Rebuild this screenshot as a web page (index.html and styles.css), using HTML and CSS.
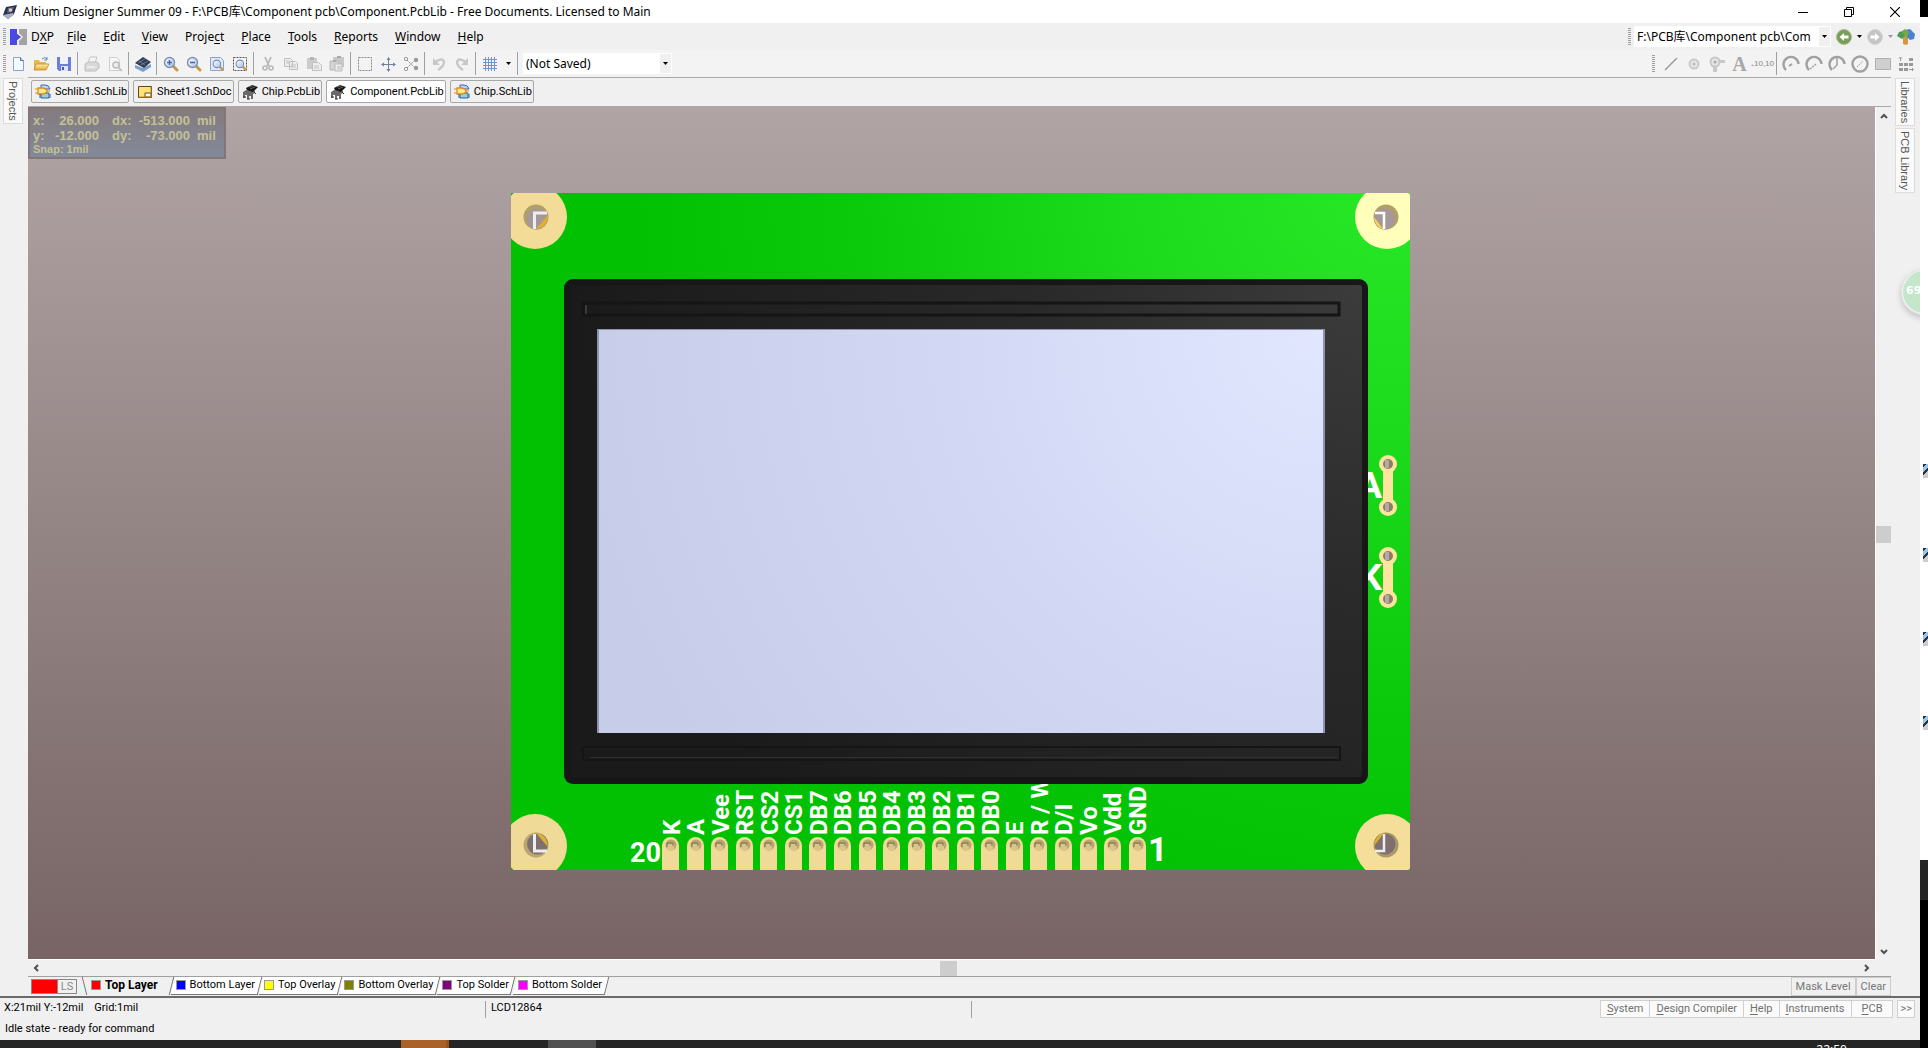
FILE: index.html
```html
<!DOCTYPE html>
<html lang="en">
<head>
<meta charset="utf-8">
<title>Altium Designer Summer 09</title>
<link rel="stylesheet" href="styles.css">
</head>
<body>
<svg class="defs" aria-hidden="true">
  <defs>
    <linearGradient id="lens" x1="0" y1="0" x2="1" y2="1"><stop offset="0" stop-color="#fff"/><stop offset="1" stop-color="#a9bfe6"/></linearGradient>
    <linearGradient id="folder" x1="0" y1="0" x2="0" y2="1"><stop offset="0" stop-color="#fff0a8"/><stop offset="1" stop-color="#e2a93c"/></linearGradient>
    <symbol id="i-caret" viewBox="0 0 5 3"><path d="M0 0h5L2.500 3z" fill="currentColor"/></symbol>
    <symbol id="i-mag" viewBox="0 0 16 16"><path d="M10 10l4 4" stroke="#c49a4a" stroke-width="3" stroke-linecap="round"/><circle cx="6.500" cy="6.500" r="5" fill="url(#lens)" stroke="#7b8fb5" stroke-width="1.400"/></symbol>
    <symbol id="i-chip" viewBox="0 0 16 16"><path d="M1 8l5-3 7 2v2l-2 1v5H9v-3H7v3H5v-4H3v3H1z" fill="#6a6a6a"/><path d="M4 4l6-3 6 2-5 5-6-2z" fill="#161616"/><path d="M1 13h3M5 15h3M12 8l2 2" stroke="#333"/><path d="M7 3l4-1M8 5l5-2" stroke="#777" stroke-width=".8"/></symbol>
    <symbol id="i-sch" viewBox="0 0 16 16"><path d="M6 1h4q4 0 5 4H6z" fill="#bcd7f5" stroke="#3467c4"/><path d="M6 9h8v5H6z" fill="#9fd0c8" stroke="#2b5fae"/><path d="M3 4h5q4 1 4 3t-4 3H3z" fill="#ffe98a" stroke="#df8a1c" stroke-width="1.300"/><path d="M0 5h3M0 9h3M12 7h3" stroke="#df8a1c"/><path d="M4 11h2M4 13h2M14 11h2M14 13h2" stroke="#2b5fae"/></symbol>
    <symbol id="i-arc" viewBox="0 0 18 18"><path d="M4 15A7.500 7.500 0 1 1 16.500 9" fill="none" stroke="#a0a0a0" stroke-width="2.400"/></symbol>
  </defs>
</svg>
<div class="screen">
  <div class="window">
    <header class="titlebar">
      <svg class="icon" viewBox="0 0 16 16"><path d="M1 11l3-8 11-2-3 9-6 5z" fill="#26324e"/><path d="M1 11l10-2 1 2-6 4z" fill="#aab2c2"/><path d="M6 4l6-1-2 5-5 1z" fill="#56698f"/><circle cx="8.500" cy="6" r="1.800" fill="#e9c9a0"/></svg>
      <h1>Altium Designer Summer 09 - F:\PCB库\Component pcb\Component.PcbLib - Free Documents. Licensed to Main</h1>
      <div class="wincontrols">
        <button aria-label="Minimize"><svg viewBox="0 0 10 10"><path d="M0 5.500h10" stroke="#000"/></svg></button>
        <button aria-label="Restore"><svg viewBox="0 0 10 10"><path d="M.5 2.500h7v7h-7zM2.500 2.500v-2h7v7h-2" fill="none" stroke="#000"/></svg></button>
        <button aria-label="Close"><svg viewBox="0 0 10 10"><path d="M0 0l10 10M10 0L0 10" stroke="#000" stroke-width="1.200"/></svg></button>
      </div>
    </header>

    <div class="menubar">
      <i class="grip"></i>
      <nav class="menus">
        <button class="dxp"><svg class="icon" viewBox="0 0 17 16"><path d="M0 0h9v16H0z" fill="#4a4ae0"/><path d="M9 0h8v16H9z" fill="#a3a3a3"/><path d="M7 0v5l4 3-4 3v5h2v-4l4-4-4-4V0z" fill="#f0f0f0"/><path d="M6 4l5 4-5 4z" fill="#4a4ae0"/></svg>D<u>X</u>P</button>
        <button><u>F</u>ile</button>
        <button><u>E</u>dit</button>
        <button><u>V</u>iew</button>
        <button>Proje<u>c</u>t</button>
        <button><u>P</u>lace</button>
        <button><u>T</u>ools</button>
        <button><u>R</u>eports</button>
        <button><u>W</u>indow</button>
        <button><u>H</u>elp</button>
      </nav>
      <div class="navtools">
        <i class="grip"></i>
        <div class="combo address"><select aria-label="Document path"><option>F:\PCB库\Component pcb\Com</option></select><svg class="caret"><use href="#i-caret"/></svg></div>
        <button class="tool" aria-label="Back"><svg class="icon" viewBox="0 0 16 16"><circle cx="8" cy="8" r="7.500" fill="#7a9d57" stroke="#a9bf94"/><path d="M3.500 8L8 4v2.500h4.500v3H8V12z" fill="#fff"/></svg></button>
        <button class="drop" aria-label="Back history"><svg class="caret"><use href="#i-caret"/></svg></button>
        <button class="tool" aria-label="Forward"><svg class="icon" viewBox="0 0 16 16"><circle cx="8" cy="8" r="7.500" fill="#c4c4c4" stroke="#d6d6d6"/><path d="M12.500 8L8 4v2.500H3.500v3H8V12z" fill="#fff"/></svg></button>
        <button class="drop off" aria-label="Forward history"><svg class="caret"><use href="#i-caret"/></svg></button>
        <button class="tool" aria-label="Home"><svg class="icon wide" viewBox="0 0 18 16"><path d="M6 7h5v8l-2 1-3-1z" fill="#d19a3c"/><path d="M0 7l2-4 4-1 3 4-4 4z" fill="#4f9a55"/><path d="M8 1l5-1 5 5-1 5-4 1-4-4z" fill="#4a82cf"/><path d="M5 2l3-2 4 3-2 5-3-2z" fill="#75a94a"/></svg></button>
      </div>
    </div>

    <div class="toolbar">
      <i class="grip"></i>
      <div class="tools">
        <button class="tool" aria-label="New"><svg class="icon" viewBox="0 0 16 16"><path d="M3.500 1.500h7l3 3v10h-10z" fill="#f4f8ff" stroke="#8ba3c7"/><path d="M10.500 1.500v3h3" fill="#c9d8ee" stroke="#56729e"/></svg></button>
        <button class="tool" aria-label="Open"><svg class="icon" viewBox="0 0 16 16"><path d="M1 4h5l1 2h6v8H1z" fill="#e6b850"/><path d="M3 8h13l-3 6H1z" fill="url(#folder)" stroke="#c38c2e" stroke-width=".8"/><path d="M9 3q3-3 5 0M14 1v3h-3" fill="none" stroke="#6b86b5"/></svg></button>
        <button class="tool" aria-label="Save"><svg class="icon" viewBox="0 0 16 16"><path d="M1 1h14v14H3l-2-2z" fill="#6c7fd6"/><path d="M4 1h8v7H4z" fill="#eef1ff"/><path d="M5 10h7v5H5z" fill="#dfe3f4"/><path d="M6 11h2v3H6z" fill="#4656a8"/></svg></button>
        <i class="sep"></i>
        <button class="tool" aria-label="Print"><svg class="icon" viewBox="0 0 16 16"><path d="M4 7l2-6h7l-2 6z" fill="#f4f4f4" stroke="#c4c4c4"/><path d="M1 8l3-2h9l2 2v4l-3 3H1z" fill="#d8d8d8" stroke="#bebebe"/><path d="M3 11h8" stroke="#fff"/></svg></button>
        <button class="tool" aria-label="Print preview"><svg class="icon" viewBox="0 0 16 16"><path d="M2.500 1.500h7l3 3v10h-10z" fill="#f7f7f7" stroke="#cfcfcf"/><circle cx="9" cy="9" r="3" fill="#eee" stroke="#bcbcbc" stroke-width="1.500"/><path d="M11 11l4 4" stroke="#c4c4c4" stroke-width="2"/></svg></button>
        <i class="sep"></i>
        <button class="tool" aria-label="3D view"><svg class="icon" viewBox="0 0 16 16"><path d="M0 9l8 3 8-4v3l-8 5-8-4z" fill="#7ba0cc"/><path d="M0 7l8-6 8 5-7 6z" fill="#2d3b52"/><path d="M3 7l7-4M6 9l7-4M4 5l6 4" stroke="#7b8ba4" stroke-width=".8"/></svg></button>
        <i class="sep"></i>
        <button class="tool" aria-label="Zoom in"><svg class="icon" viewBox="0 0 16 16"><use href="#i-mag"/><path d="M4 6.500h5M6.500 4v5" stroke="#4a66a8" stroke-width="1.500"/></svg></button>
        <button class="tool" aria-label="Zoom out"><svg class="icon" viewBox="0 0 16 16"><use href="#i-mag"/><path d="M4 6.500h5" stroke="#4a66a8" stroke-width="1.500"/></svg></button>
        <button class="tool" aria-label="Zoom document"><svg class="icon" viewBox="0 0 16 16"><path d="M1.500 1.500h10l3 3v10h-13z" fill="#dfe9f8" stroke="#8ba3c7"/><use href="#i-mag" x="3" y="3" width="12" height="12"/></svg></button>
        <button class="tool" aria-label="Zoom area"><svg class="icon" viewBox="0 0 16 16"><path d="M1.500 1.500h13v13h-13z" fill="none" stroke="#556" stroke-dasharray="2 1"/><use href="#i-mag" x="3" y="3" width="12" height="12"/></svg></button>
        <i class="sep"></i>
        <button class="tool" aria-label="Cut"><svg class="icon" viewBox="0 0 16 16"><path d="M5 1l4 9M11 1L7 10" stroke="#b8b8b8" stroke-width="1.800"/><circle cx="5" cy="12" r="2" fill="none" stroke="#b8b8b8" stroke-width="1.600"/><circle cx="11" cy="12" r="2" fill="none" stroke="#b8b8b8" stroke-width="1.600"/></svg></button>
        <button class="tool" aria-label="Copy"><svg class="icon" viewBox="0 0 16 16"><path d="M1.500 2.500h6l2 2v6h-8zM6.500 5.500h6l2 2v6h-8z" fill="#ececec" stroke="#c0c0c0"/><path d="M8 9h5M8 11h5M3 5h3M3 7h3" stroke="#c4c4c4"/></svg></button>
        <button class="tool" aria-label="Paste"><svg class="icon" viewBox="0 0 16 16"><path d="M1 2h10v11H1z" fill="#cccccc"/><path d="M4 1h4v3H4z" fill="#b4b4b4"/><path d="M6.500 6.500h6l3 3v5h-9z" fill="#eee" stroke="#c0c0c0"/><path d="M8 10h5M8 12h5" stroke="#c4c4c4"/></svg></button>
        <button class="tool" aria-label="Paste special"><svg class="icon" viewBox="0 0 16 16"><path d="M4 1h11v10H4z" fill="#c8c8c8"/><path d="M1 5h9v9H1z" fill="#d4d4d4" stroke="#b8b8b8"/><path d="M8 0h4v2H8zM4 4h3v2H4z" fill="#aaa"/><path d="M6 8h7v7H6z" fill="#eee" stroke="#bbb"/><path d="M8 11h4M8 13h4" stroke="#bbb"/></svg></button>
        <i class="sep"></i>
        <button class="tool" aria-label="Select area"><svg class="icon" viewBox="0 0 16 16"><path d="M1.500 1.500h13v13h-13z" fill="none" stroke="#888" stroke-dasharray="2 1"/></svg></button>
        <button class="tool" aria-label="Move"><svg class="icon" viewBox="0 0 16 16"><path d="M2 8.500h13M8.500 2v13" stroke="#71819a"/><path d="M6.500 4l2-3 2 3zM6.500 13l2 3 2-3zM4 6.500l-3 2 3 2zM13 6.500l3 2-3 2z" fill="#71819a"/></svg></button>
        <button class="tool" aria-label="Deselect"><svg class="icon" viewBox="0 0 16 16"><path d="M4 4l7 7M4 12l7-7" stroke="#888" stroke-dasharray="1.500 1"/><circle cx="3" cy="3" r="1.700" fill="none" stroke="#999"/><circle cx="3" cy="13" r="1.700" fill="none" stroke="#999"/><circle cx="13" cy="4" r="2.200" fill="#999"/><circle cx="13" cy="12" r="2.200" fill="#999"/></svg></button>
        <i class="sep"></i>
        <button class="tool" aria-label="Undo"><svg class="icon" viewBox="0 0 16 16"><path d="M4 6q8-5 9 0 0 4-6 8" fill="none" stroke="#c8c8c8" stroke-width="2.500"/><path d="M2 2v7h7z" fill="#c8c8c8"/></svg></button>
        <button class="tool" aria-label="Redo"><svg class="icon" viewBox="0 0 16 16"><path d="M12 6q-8-5-9 0 0 4 6 8" fill="none" stroke="#c8c8c8" stroke-width="2.500"/><path d="M14 2v7H7z" fill="#c8c8c8"/></svg></button>
        <i class="sep"></i>
        <button class="tool" aria-label="Grid"><svg class="icon" viewBox="0 0 16 16"><path d="M3.500 1v14M6.500 1v14M9.500 1v14M12.500 1v14M1 3.500h14M1 6.500h14M1 9.500h14M1 12.500h14" stroke="#6f93d2"/></svg></button>
        <button class="drop" aria-label="Grid options"><svg class="caret"><use href="#i-caret"/></svg></button>
        <i class="sep"></i>
      </div>
      <div class="combo saved"><select aria-label="View configuration"><option>(Not Saved)</option></select><svg class="caret"><use href="#i-caret"/></svg></div>
      <div class="placetools">
        <i class="grip"></i>
        <button class="tool" aria-label="Place line"><svg class="icon" viewBox="0 0 16 16"><path d="M2 14L14 2" stroke="#999" stroke-width="1.500"/></svg></button>
        <button class="tool" aria-label="Place pad"><svg class="icon" viewBox="0 0 16 16"><circle cx="8" cy="8" r="4.500" fill="#e6e6e6" stroke="#cacaca" stroke-width="2"/><circle cx="8" cy="8" r="1.500" fill="#bbb"/></svg></button>
        <button class="tool" aria-label="Place via"><svg class="icon" viewBox="0 0 16 16"><path d="M4 8h4v8H4zM6 4h10v3H6z" fill="#c8c8c8"/><circle cx="6" cy="6" r="4.500" fill="#e6e6e6" stroke="#c6c6c6" stroke-width="2"/><circle cx="6" cy="6" r="1.500" fill="#aaa"/></svg></button>
        <button class="tool letter" aria-label="Place string">A</button>
        <button class="tool coord" aria-label="Place coordinate">₊10,10</button>
        <i class="sep"></i>
        <button class="tool" aria-label="Arc by centre"><svg class="icon wide" viewBox="0 0 18 18"><use href="#i-arc"/><path d="M7 11l3-2" stroke="#a0a0a0" stroke-width="2"/></svg></button>
        <button class="tool" aria-label="Arc by edge"><svg class="icon wide" viewBox="0 0 18 18"><use href="#i-arc"/><path d="M5 14l6-5" stroke="#a0a0a0" stroke-width="1.500" stroke-dasharray="2 1"/></svg></button>
        <button class="tool" aria-label="Arc any angle"><svg class="icon wide" viewBox="0 0 18 18"><use href="#i-arc"/><path d="M9 2v8l-4 4" fill="none" stroke="#a0a0a0" stroke-width="1.500"/></svg></button>
        <button class="tool" aria-label="Full circle"><svg class="icon wide" viewBox="0 0 18 18"><circle cx="9" cy="9" r="7.500" fill="none" stroke="#a0a0a0" stroke-width="2.400"/><path d="M6 12l6-6" stroke="#a0a0a0" stroke-dasharray="2 1"/></svg></button>
        <button class="tool" aria-label="Fill"><svg class="icon" viewBox="0 0 16 16"><path d="M.5 2.500h15v11H.5z" fill="#cfcfcf" stroke="#b0b0b0"/></svg></button>
        <button class="tool" aria-label="Array"><svg class="icon" viewBox="0 0 16 16"><path d="M1 7h4v3H1zM1 12h4v3H1zM6 7h4v3H6zM6 12h4v3H6zM11 2h4v3h-4zM11 7h4v3h-4z" fill="#999"/><path d="M2.500 1v4M1 2.500L2.500 1 4 2.500M11 13.500h4M14 12l1.500 1.500L14 15" fill="none" stroke="#999"/></svg></button>
      </div>
    </div>

    <div class="workspace">
      <aside class="side left"><button>Projects</button></aside>
      <main class="editor">
        <nav class="doctabs">
          <button><svg class="icon"><use href="#i-sch"/></svg>Schlib1.SchLib</button>
          <button><svg class="icon" viewBox="0 0 16 16"><path d="M1.500 2.500h13v11h-13z" fill="#ffe17a" stroke="#5b4a1a"/><path d="M8 9h6v4H8z" fill="#fff" stroke="#5b4a1a"/><path d="M14 3v10H2" fill="none" stroke="#c28a1a"/></svg>Sheet1.SchDoc</button>
          <button><svg class="icon"><use href="#i-chip"/></svg>Chip.PcbLib</button>
          <button class="current"><svg class="icon"><use href="#i-chip"/></svg>Component.PcbLib</button>
          <button><svg class="icon"><use href="#i-sch"/></svg>Chip.SchLib</button>
        </nav>
        <div class="viewport">
          <div class="canvas">
            <svg class="board" viewBox="28 107 1847 852" role="img" aria-label="LCD12864 component">
              <defs>
                <radialGradient id="green" gradientUnits="userSpaceOnUse" cx="1390" cy="170" r="760"><stop offset="0" stop-color="#28e828"/><stop offset=".35" stop-color="#1cdb1c"/><stop offset=".7" stop-color="#0bca0b"/><stop offset="1" stop-color="#02c102"/></radialGradient>
                <radialGradient id="plastic" gradientUnits="userSpaceOnUse" cx="1368" cy="279" r="800"><stop offset="0" stop-color="#3c3c3c"/><stop offset=".4" stop-color="#2a2a2a"/><stop offset="1" stop-color="#1a1a1a"/></radialGradient>
                <radialGradient id="glass" gradientUnits="userSpaceOnUse" cx="1325" cy="329" r="760"><stop offset="0" stop-color="#e2e7ff"/><stop offset=".5" stop-color="#d2d8f4"/><stop offset="1" stop-color="#c7cde9"/></radialGradient>
                <clipPath id="edge"><path d="M511 193h899v677H511z"/></clipPath>
                <g id="pin"><path d="M0 33V8.500a8.500 8.500 0 0 1 17 0V33z" fill="#f0da98"/><circle cx="9" cy="8" r="5.500" fill="#b9a671"/><path d="M5 13V7h7v6z" fill="#d8c58a"/><path d="M5 10V6h6v3" fill="none" stroke="#7f704a"/></g>
                <g id="pad"><circle r="9"/><circle r="5" fill="#8c7f5c"/><path d="M-3-4h4v8h-4z" fill="#b5a8ad"/></g>
              </defs>
              <g clip-path="url(#edge)">
                <path d="M511 193h899v677H511z" fill="url(#green)"/>
                <g class="mount">
                  <circle cx="535" cy="217" r="32" fill="#f2dc98"/>
                  <circle cx="1387" cy="217" r="32" fill="#ffffbb"/>
                  <circle cx="535" cy="846" r="32" fill="#f0da98"/>
                  <circle cx="1387" cy="846" r="32" fill="#f4de9a"/>
                </g>
                <circle cx="536" cy="217" r="12.500" fill="#b09f6a"/><circle cx="537" cy="219" r="10.500" fill="#a69899"/><path d="M548 215q0 13-12 14z" fill="#ddb12e"/><path d="M534.500 229v-16H547" fill="none" stroke="#eee" stroke-width="3"/>
                <circle cx="1386" cy="217" r="12.500" fill="#b09f6a"/><circle cx="1384.500" cy="219" r="10.500" fill="#a69899"/><path d="M1374 217q1 10 9 12z" fill="#ffd24a"/><path d="M1375 213h9v16" fill="none" stroke="#fff" stroke-width="2.500"/>
                <circle cx="536" cy="845" r="12.500" fill="#b9a671"/><circle cx="537.500" cy="844" r="10.500" fill="#7f6f6f"/><path d="M536 833q11 1 12 14z" fill="#ddb12e"/><path d="M534.500 834v17H547" fill="none" stroke="#eee" stroke-width="3"/>
                <circle cx="1386" cy="845" r="12.500" fill="#a8986a"/><circle cx="1385" cy="844" r="10.500" fill="#7f6f6f"/><path d="M1374 846q1-11 10-13z" fill="#ddb12e"/><path d="M1375 851h9v-17" fill="none" stroke="#eee" stroke-width="2.500"/>

                <g class="silk side-label"><text x="1382" y="498">A</text><text x="1382" y="590">K</text></g>
                <g class="silk pin-label">
                  <text transform="translate(680 835) rotate(-90)">K</text>
                  <text transform="translate(704 835) rotate(-90)">A</text>
                  <text transform="translate(729 835) rotate(-90)">Vee</text>
                  <text transform="translate(753 835) rotate(-90)">RST</text>
                  <text transform="translate(778 835) rotate(-90)">CS2</text>
                  <text transform="translate(802 835) rotate(-90)">CS1</text>
                  <text transform="translate(827 835) rotate(-90)">DB7</text>
                  <text transform="translate(851 835) rotate(-90)">DB6</text>
                  <text transform="translate(876 835) rotate(-90)">DB5</text>
                  <text transform="translate(900 835) rotate(-90)">DB4</text>
                  <text transform="translate(925 835) rotate(-90)">DB3</text>
                  <text transform="translate(950 835) rotate(-90)">DB2</text>
                  <text transform="translate(974 835) rotate(-90)">DB1</text>
                  <text transform="translate(999 835) rotate(-90)">DB0</text>
                  <text transform="translate(1023 835) rotate(-90)">E</text>
                  <text transform="translate(1048 835) rotate(-90)">R / W</text>
                  <text transform="translate(1072 835) rotate(-90)">D/I</text>
                  <text transform="translate(1097 835) rotate(-90)">Vo</text>
                  <text transform="translate(1121 835) rotate(-90)">Vdd</text>
                  <text transform="translate(1146 835) rotate(-90)">GND</text>
                </g>
                <g class="silk"><text class="last" x="661" y="862">20</text><text class="first" x="1148" y="861">1</text></g>
                <use href="#pin" x="662" y="837"/><use href="#pin" x="687" y="837"/><use href="#pin" x="711" y="837"/><use href="#pin" x="736" y="837"/><use href="#pin" x="760" y="837"/><use href="#pin" x="785" y="837"/><use href="#pin" x="809" y="837"/><use href="#pin" x="834" y="837"/><use href="#pin" x="859" y="837"/><use href="#pin" x="883" y="837"/><use href="#pin" x="908" y="837"/><use href="#pin" x="932" y="837"/><use href="#pin" x="957" y="837"/><use href="#pin" x="981" y="837"/><use href="#pin" x="1006" y="837"/><use href="#pin" x="1030" y="837"/><use href="#pin" x="1055" y="837"/><use href="#pin" x="1080" y="837"/><use href="#pin" x="1104" y="837"/><use href="#pin" x="1129" y="837"/>
                <g fill="#fde5a0"><path d="M1383 464h10v43h-10zM1383 556h10v43h-10z"/><use href="#pad" x="1388" y="464"/><use href="#pad" x="1388" y="507"/><use href="#pad" x="1388" y="556"/><use href="#pad" x="1388" y="599"/></g>
              </g>
              <rect x="564" y="279" width="804" height="505" rx="9" fill="#171717"/>
              <rect x="570" y="285" width="792" height="492" rx="3" fill="url(#plastic)"/>
              <rect x="583" y="303" width="756" height="12" fill="url(#plastic)" stroke="#151515" stroke-width="3"/>
              <path d="M586 305v9" stroke="#3a3a3a" stroke-width="2"/>
              <rect x="583" y="747" width="757" height="13" fill="url(#plastic)" stroke="#151515" stroke-width="2"/>
              <path d="M590 757.500h747" stroke="#303030"/>
              <path d="M597 329h728v404H597z" fill="#8c94ad"/>
              <path d="M599 330h724v403H599z" fill="url(#glass)"/>
            </svg>
            <div class="hud">
              <span>x:</span><span class="num">26.000</span><span>dx:</span><span class="num">-513.000</span><span>mil</span>
              <span>y:</span><span class="num">-12.000</span><span>dy:</span><span class="num">-73.000</span><span>mil</span>
              <span class="snap">Snap: 1mil</span>
            </div>
          </div>
          <div class="vscroll"><svg viewBox="0 0 8 6"><path d="M1 5l3-3 3 3" /></svg><i></i><svg viewBox="0 0 8 6"><path d="M1 1l3 3 3-3"/></svg></div>
          <div class="hscroll"><svg viewBox="0 0 6 8"><path d="M5 1L2 4l3 3"/></svg><i></i><svg viewBox="0 0 6 8"><path d="M1 1l3 3-3 3"/></svg></div>
        </div>
        <div class="layerbar">
          <div class="layerset"><i></i><button>LS</button></div>
          <nav class="layers">
            <button class="current"><i class="c-red"></i>Top Layer</button>
            <button><i class="c-blue"></i>Bottom Layer</button>
            <button><i class="c-yellow"></i>Top Overlay</button>
            <button><i class="c-olive"></i>Bottom Overlay</button>
            <button><i class="c-purple"></i>Top Solder</button>
            <button><i class="c-magenta"></i>Bottom Solder</button>
          </nav>
          <div class="mask"><button>Mask Level</button><button>Clear</button></div>
        </div>
      </main>
      <aside class="side right"><button>Libraries</button><button>PCB Library</button><span class="badge">69</span></aside>
    </div>

    <footer class="status">
      <div class="cells">
        <span>X:21mil Y:-12mil &nbsp;&nbsp; Grid:1mil</span>
        <span>LCD12864</span>
        <span></span>
      </div>
      <div class="panels">
        <button><u>S</u>ystem</button><button><u>D</u>esign Compiler</button><button><u>H</u>elp</button><button><u>I</u>nstruments</button><button><u>P</u>CB</button><button class="more">&gt;&gt;</button>
      </div>
      <p>Idle state - ready for command</p>
    </footer>
    <div class="taskbar"><i class="t1"></i><i class="t2"></i><span>22:50</span></div>
  </div>
  <div class="desktop">
    <i class="black top"></i>
    <div class="shortcuts"><i></i><i></i><i></i><i></i></div>
    <i class="black"></i>
  </div>
</div>
</body>
</html>
```
FILE: styles.css
```css
* { box-sizing: border-box; }
body { margin: 0; font: 12px/16px "Noto Sans", "Noto Sans CJK SC", sans-serif; color: #000; background: #fff; }
button, select { font: inherit; color: inherit; border: 0; background: none; padding: 0; margin: 0; border-radius: 0; white-space: nowrap; }
u { text-underline-offset: 2px; }
.defs { position: absolute; width: 0; height: 0; }
.icon { width: 16px; height: 16px; flex: none; display: block; }
.icon.wide { width: 18px; height: 18px; }
.caret { width: 5px; height: 3px; display: block; flex: none; }

.screen { display: grid; grid-template-columns: minmax(0, 1fr) 8px; height: 100vh; overflow: hidden; }
.window { display: flex; flex-direction: column; background: #f0f0f0; min-height: 0; overflow: hidden; }

.titlebar { display: flex; align-items: center; height: 23px; flex: none; background: #fff; padding-left: 2px; gap: 5px; }
.titlebar h1 { margin: 0; font-size: 12px; font-weight: 400; white-space: nowrap; flex: 1; }
.wincontrols { display: flex; padding-right: 2px; }
.wincontrols button { width: 46px; height: 20px; display: grid; place-items: center; }
.wincontrols svg { width: 10px; height: 10px; }

.menubar, .toolbar { display: flex; align-items: center; height: 27px; flex: none; padding: 0 3px; }
.grip { width: 3px; height: 17px; flex: none; background: repeating-linear-gradient(#a0a0a0 0 1px, transparent 1px 2px); }
.menus { display: flex; gap: 17px; flex: 1; padding-left: 4px; }
.dxp { display: flex; align-items: center; gap: 0; margin-right: -4px; }
.dxp .icon { width: 17px; margin-right: 4px; }
.navtools, .placetools, .tools { display: flex; align-items: center; }
.tool { width: 23px; height: 22px; display: grid; place-items: center; flex: none; }
.drop { width: 14px; height: 22px; display: grid; place-items: center; }
.navtools .drop { width: 8px; }
.off { color: #999; }
.sep { width: 1px; height: 23px; background: #a0a0a0; margin: 0 2px; flex: none; }
.toolbar { background: #f3f3f3; }
.combo { display: flex; align-items: center; background: #fff; border: 1px solid #fff; height: 21px; position: relative; }
.combo select { appearance: none; width: 100%; height: 19px; padding: 0 16px 0 2px; }
.combo::before { content: ""; position: absolute; right: 0; top: 0; bottom: 0; width: 11px; background: #f0f0f0; }
.combo .caret { position: absolute; right: 3px; top: 8px; }
.address { width: 197px; margin: 0 1px 0 3px; }
.saved { width: 149px; margin-left: 3px; }
.placetools { margin-left: auto; }
.placetools .grip { margin-right: 4px; }
.letter { font: 700 20px/22px "Liberation Serif", serif; color: #a6a6a6; }
.coord { font: 8px/10px "Liberation Sans", sans-serif; color: #888; }

.workspace { display: grid; grid-template-columns: 28px minmax(0, 1fr) 29px; flex: 1; min-height: 0; }
.side { display: flex; flex-direction: column; gap: 2px; padding-top: 1px; position: relative; overflow: hidden; }
.side.left { padding-left: 3px; }
.side.right { padding-left: 4px; }
.side button { writing-mode: vertical-rl; width: 20px; padding: 2px 0; border: 1px solid #dcdcdc; background: #fafafa; color: #555; font: 11px/18px "Liberation Sans", sans-serif; }
.badge { position: absolute; left: 10px; top: 192px; width: 46px; height: 46px; border-radius: 50%; border: 2px solid #f6f6f6; outline: 1px solid #ddd; outline-offset: -1px; background: #c4e6ca; color: #fff; font: 700 11px/40px "DejaVu Sans", sans-serif; padding-left: 3px; box-shadow: 0 3px 6px #0003; }

.editor { display: flex; flex-direction: column; min-width: 0; min-height: 0; }
.doctabs { display: flex; gap: 4px; height: 30px; flex: none; padding: 2px 3px; border: solid #a8a8a8; border-width: 1px 0; }
.doctabs button { display: flex; align-items: center; gap: 4px; height: 23px; padding: 0 1px 0 3px; border: 1px solid #a8a8a8; border-radius: 2px; font: 11px/16px Roboto, "Liberation Sans", sans-serif; }
.doctabs .current { background: #fff; }

.viewport { flex: 1; min-height: 0; display: grid; grid-template: minmax(0, 1fr) 16px / minmax(0, 1fr) 15px; }
.canvas { position: relative; background: linear-gradient(#b1a4a4, #948585 50%, #786464); border: solid #fff; border-width: 0 1px 1px 0; overflow: hidden; }
.board { display: block; width: 100%; height: 100%; }
.silk { fill: #fff; font-family: Roboto, "Liberation Sans", sans-serif; font-weight: 700; }
.pin-label { font-size: 24px; }
.last { font-size: 27px; text-anchor: end; }
.first { font-size: 34px; }
.side-label { font-size: 37px; text-anchor: end; }

.hud { position: absolute; left: 0; top: 0; width: 198px; height: 52px; padding: 4px 3px 0; border: 2px solid #827677; background: linear-gradient(#847b7d, #83899a); color: #c3c196; font: 700 13px/15px "Liberation Sans", sans-serif; display: grid; grid-template-columns: 14px 52px 27px 64px 20px; column-gap: 0; justify-content: start; align-content: start; }
.hud span:nth-child(5n) { padding-left: 7px; }
.hud span:nth-child(5n + 3) { padding-left: 13px; }
.hud .num { text-align: right; }
.hud .snap { grid-column: 1 / -1; font-size: 11px; line-height: 12px; }

.vscroll, .hscroll { display: flex; justify-content: space-between; align-items: center; }
.vscroll { flex-direction: column; padding: 6px 0 5px; }
.hscroll { padding: 0 6px 0 5px; }
.vscroll svg { width: 8px; height: 6px; }
.hscroll svg { width: 6px; height: 8px; }
.vscroll path, .hscroll path { fill: none; stroke: #505050; stroke-width: 2; }
.vscroll i { width: 15px; height: 17px; background: #cdcdcd; }
.hscroll i { width: 17px; height: 15px; background: #cdcdcd; margin-right: 6px; }

.layerbar { display: flex; height: 20px; flex: none; border-top: 1px solid #a0a0a0; font: 11px/14px Roboto, "Liberation Sans", sans-serif; }
.layerset { display: flex; margin: 2px 6px 0 3px; height: 15px; border: 1px solid #888; width: 46px; }
.layerset i { width: 25px; background: #f00; }
.layerset button { flex: 1; color: #888; line-height: 13px; border-left: 1px solid #888; }
.layers { display: flex; flex: 1; }
.layers button { position: relative; isolation: isolate; display: flex; align-items: center; gap: 4px; height: 18px; padding: 0 5px 2px 4px; }
.layers button::before { content: ""; position: absolute; z-index: -1; inset: 0 0 0 1px; background: #fff; border: solid #777; border-width: 0 1px 1px 0; transform: skewX(-14deg); }
.layers .current { font-weight: 700; font-size: 12px; padding: 0 14px 2px 8px; }
.layers .current::before { background: none; border-width: 0 1px 0 0; }
.layers .current::after { content: ""; position: absolute; inset: 0 50% 0 1px; border-left: 1px solid #777; transform: skewX(14deg); }
.layers i { width: 10px; height: 10px; border: 1px solid #999; }
.c-red { background: #f00; } .c-blue { background: #00f; } .c-yellow { background: #ff0; }
.c-olive { background: #808000; } .c-purple { background: #800080; } .c-magenta { background: #f0f; }
.mask { display: flex; color: #777; }
.mask button { border: 1px solid #ccc; padding: 0 4px; height: 19px; }

.status { flex: none; height: 44px; display: grid; grid-template: 23px 19px / minmax(0, 1fr) auto; border-top: 2px solid #6a6a6a; font: 11px/16px Roboto, "Liberation Sans", sans-serif; }
.cells { display: flex; padding: 3px 0 0 4px; line-height: 14px; }
.cells span { width: 486px; height: 17px; flex: 0 1 auto; }
.cells span:first-child { width: 481px; }
.cells span + span { border-left: 1px solid #a0a0a0; padding-left: 5px; }
.panels { display: flex; padding: 2px 5px 0 0; color: #707070; }
.panels button { height: 18px; padding: 0 6px; background: #fafafa; border: 1px solid #d0d0d0; margin-left: -1px; }
.panels button:nth-child(5) { padding: 0 10px; }
.panels .more { margin-left: 4px; padding: 0 2px; }
.status p { margin: 0; padding: 0 5px; }
.taskbar { flex: none; height: 8px; background: #252525; display: flex; overflow: hidden; padding-left: 401px; padding-right: 73px; }
.t1 { width: 48px; background: #a8622a; border-right: 3px solid #995420; }
.t2 { width: 48px; background: #505050; margin-left: 99px; }
.taskbar span { margin-left: auto; color: #fff; font: 12px/14px "Noto Sans", sans-serif; padding-top: 3px; }

.desktop { display: flex; flex-direction: column; background: #fff; overflow: hidden; }
.black { flex: none; height: 188px; background: linear-gradient(#242424 40px, #000 40px); }
.black.top { height: 17px; background: #000; }
.shortcuts { flex: 1; display: flex; flex-direction: column; gap: 70px; padding: 447px 0 0 3px; }
.shortcuts i { height: 14px; background: linear-gradient(135deg, #234 20%, #9bc4ea 20% 45%, #234 45% 60%, #ccc 60%); }
```
